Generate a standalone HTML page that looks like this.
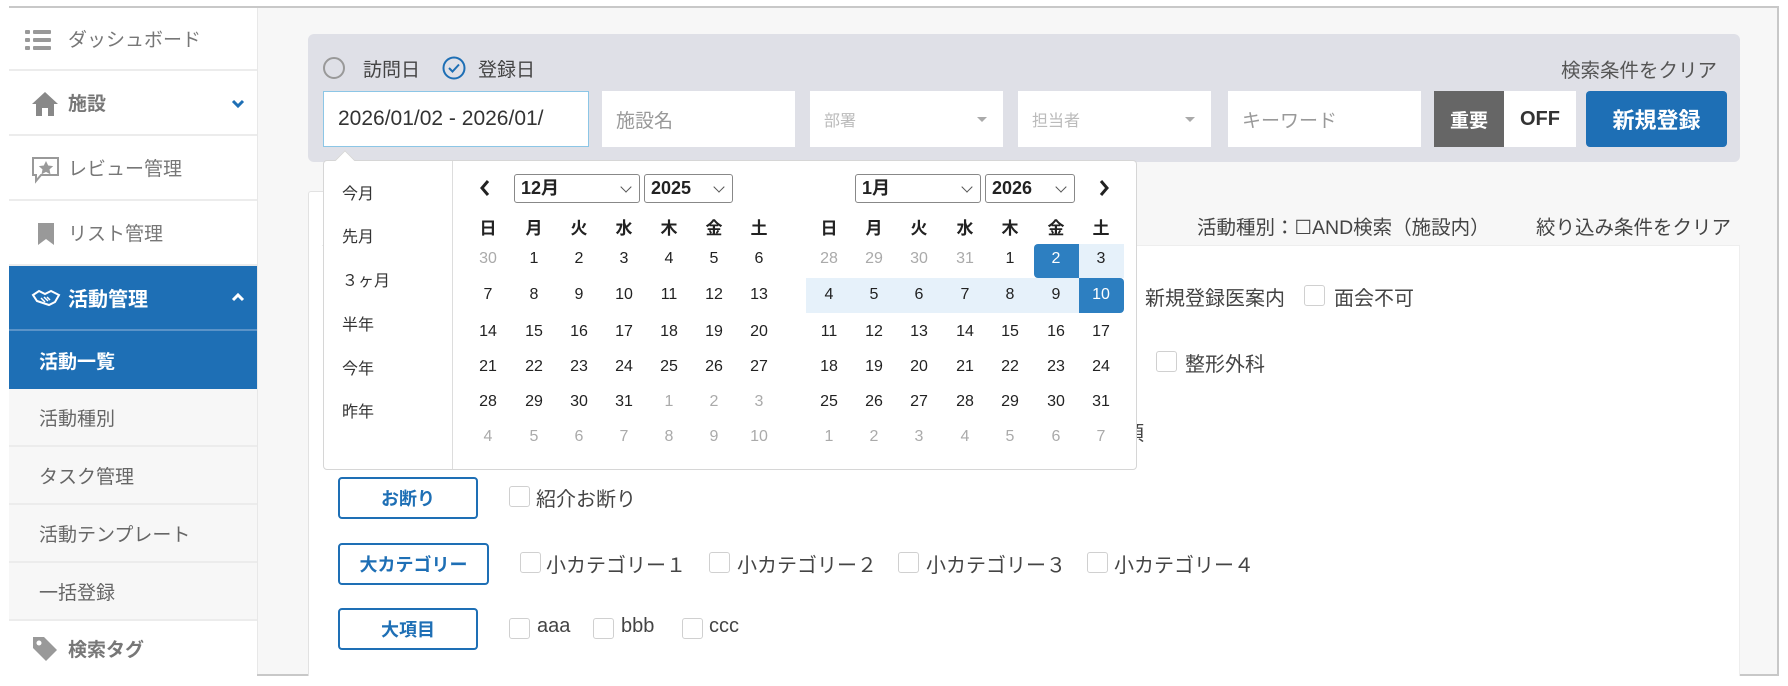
<!DOCTYPE html>
<html><head><meta charset="utf-8">
<style>
*{box-sizing:border-box;margin:0;padding:0}
body{width:1788px;height:686px;background:#fff;font-family:"Liberation Sans","Noto Sans CJK JP",sans-serif;position:relative;overflow:hidden;color:#333}
.a{position:absolute}
#frame{left:9px;top:6px;width:1770px;height:670px;border:2px solid #c8c8c8;background:#f7f7f7;overflow:hidden}
.side{position:absolute;left:9px;width:248px;border-bottom:2px solid #ececec;background:#fff;color:#666;font-size:19px;display:flex;align-items:center}
.side .t{position:absolute;left:59px}
.sub{background:#f7f7f7;color:#666}
.sub .t{left:30px}
.blue{background:#1e6fb5;color:#fff;border-bottom:2px solid #5b93c8}
.panel{left:308px;top:34px;width:1432px;height:128px;background:#dfe0e7;border-radius:6px}
.inp{top:91px;height:56px;background:#fff;font-size:19px;color:#999;display:flex;align-items:center;padding-left:14px}
.caret{position:absolute;right:16px;top:26px;width:0;height:0;border-left:5px solid transparent;border-right:5px solid transparent;border-top:5px solid #aaa}
.pop{left:323px;top:160px;width:814px;height:310px;background:#fff;border:1px solid #d6d6d6;border-radius:4px}
.rng{position:absolute;left:18px;font-size:16px;color:#333}
.sel{top:174px;height:29px;border:1px solid #888;border-radius:3px;background:#fff;font-size:18px;font-weight:bold;padding-left:6px;line-height:27px;color:#222}
.sel:after{content:"";position:absolute;right:9px;top:8px;width:7px;height:7px;border-right:1.5px solid #555;border-bottom:1.5px solid #555;transform:rotate(45deg)}
.d{position:absolute;width:44px;text-align:center;font-size:16px;color:#222;transform:translateX(-22px)}
.g{color:#aaa}
.h{font-weight:bold;font-size:17px}
.btn{height:42px;border:2px solid #1e6fb5;border-radius:4px;background:#fff;color:#1e6fb5;font-weight:bold;font-size:18px;display:flex;align-items:center;justify-content:center}
.cb{width:21px;height:21px;border:1.5px solid #d0d0d0;border-radius:3px;background:#fff}
.lb{font-size:20px;color:#444}
</style></head><body>
<div id="frame" class="a"></div>
<div class="a" style="left:257px;top:8px;width:1px;height:666px;background:#e8e8e8"></div>

<!-- sidebar -->
<div class="side" style="top:8px;height:63px"><svg class="a" style="left:16px;top:21px" width="28" height="22"><g fill="#999"><rect x="0" y="1" width="5" height="4" rx="1"/><rect x="0" y="9" width="5" height="4" rx="1"/><rect x="0" y="17" width="5" height="4" rx="1"/><rect x="8" y="1" width="18" height="4" rx="1"/><rect x="8" y="9" width="18" height="4" rx="1"/><rect x="8" y="17" width="18" height="4" rx="1"/></g></svg><span class="t" style="color:#777">ダッシュボード</span></div>
<div class="side" style="top:71px;height:65px"><svg class="a" style="left:22px;top:20px" width="28" height="26"><path d="M14 1 L27 13 H23 V25 H17 V17 H11 V25 H5 V13 H1 Z" fill="#888"/></svg><span class="t" style="color:#777;font-weight:bold">施設</span><svg class="a" style="left:222px;top:28px" width="14" height="10"><path d="M2 2 L7 7 L12 2" stroke="#1e6fb5" stroke-width="3" fill="none"/></svg></div>
<div class="side" style="top:136px;height:65px"><svg class="a" style="left:22px;top:20px" width="30" height="28"><path d="M2 2 H27 V19 H10 L5 25 V19 H2 Z" stroke="#999" stroke-width="2" fill="none"/><path d="M15 5 l2.2 4.5 5 .6 -3.7 3.3 1 5 -4.5-2.5 -4.5 2.5 1-5 -3.7-3.3 5-.6z" fill="#999"/></svg><span class="t" style="color:#777">レビュー管理</span></div>
<div class="side" style="top:201px;height:65px"><svg class="a" style="left:28px;top:21px" width="18" height="24"><path d="M1 1 H17 V23 L9 17 L1 23 Z" fill="#999"/></svg><span class="t" style="color:#777">リスト管理</span></div>
<div class="side blue" style="top:266px;height:65px"><svg class="a" style="left:22px;top:23px" width="30" height="18"><path d="M2 6 L8 2 L14 5 L20 2 L28 6 L24 13 L18 16 L12 14 L6 12 Z" stroke="#fff" stroke-width="2" fill="none"/><path d="M10 9 l4 4 M13 8 l4 4 M16 8 l3 3" stroke="#fff" stroke-width="1.5"/></svg><span class="t" style="font-weight:bold;font-size:20px">活動管理</span><svg class="a" style="left:222px;top:26px" width="14" height="10"><path d="M2 8 L7 3 L12 8" stroke="#fff" stroke-width="3" fill="none"/></svg></div>
<div class="side blue" style="top:331px;height:58px;border-bottom:none"><span class="t" style="left:30px;font-weight:bold">活動一覧</span></div>
<div class="side sub" style="top:389px;height:58px"><span class="t">活動種別</span></div>
<div class="side sub" style="top:447px;height:58px"><span class="t">タスク管理</span></div>
<div class="side sub" style="top:505px;height:58px"><span class="t">活動テンプレート</span></div>
<div class="side sub" style="top:563px;height:58px"><span class="t">一括登録</span></div>
<div class="side" style="top:621px;height:55px;border:none"><svg class="a" style="left:22px;top:14px" width="28" height="28"><path d="M2 2 H13 L26 15 L15 26 L2 13 Z" fill="#999"/><circle cx="8" cy="8" r="2.5" fill="#fff"/></svg><span class="t" style="color:#777;font-weight:bold">検索タグ</span></div>

<!-- search panel -->
<div class="a panel"></div>
<div class="a" style="left:323px;top:57px;width:22px;height:22px;border:2px solid #999;border-radius:50%"></div>
<div class="a" style="left:363px;top:55px;font-size:19px;color:#444">訪問日</div>
<svg class="a" style="left:442px;top:56px" width="24" height="24"><circle cx="12" cy="12" r="10.5" stroke="#1e6fb5" stroke-width="2" fill="none"/><path d="M7 12 l3.5 3.5 l6.5-7" stroke="#1e6fb5" stroke-width="2" fill="none"/></svg>
<div class="a" style="left:478px;top:55px;font-size:19px;color:#444">登録日</div>
<div class="a" style="left:1561px;top:54px;font-size:19.5px;color:#555">検索条件をクリア</div>

<div class="a inp" style="left:323px;width:266px;border:1.5px solid #8cc6e6;color:#333;font-size:21px;overflow:hidden;white-space:nowrap">2026/01/02 - 2026/01/</div>
<div class="a inp" style="left:602px;width:193px">施設名</div>
<div class="a inp" style="left:810px;width:193px;font-size:16px;color:#bbb">部署<span class="caret"></span></div>
<div class="a inp" style="left:1018px;width:193px;font-size:16px;color:#bbb">担当者<span class="caret"></span></div>
<div class="a inp" style="left:1228px;width:193px">キーワード</div>
<div class="a" style="left:1434px;top:91px;width:70px;height:56px;background:#666;color:#fff;font-weight:bold;font-size:19px;display:flex;align-items:center;justify-content:center">重要</div>
<div class="a" style="left:1504px;top:91px;width:72px;height:56px;background:#fff;color:#333;font-weight:bold;font-size:20px;display:flex;align-items:center;justify-content:center">OFF</div>
<div class="a" style="left:1586px;top:91px;width:141px;height:56px;background:#1e6fb5;border-radius:4px;color:#fff;font-weight:bold;font-size:22px;display:flex;align-items:center;justify-content:center">新規登録</div>

<!-- card -->
<div class="a" style="left:308px;top:191px;width:30px;height:290px;background:#fff;border:1px solid #e2e2e2;border-radius:3px 0 0 0"></div>
<div class="a" style="left:1197px;top:211px;font-size:19.5px;color:#444">活動種別：☐AND検索（施設内）</div>
<div class="a" style="left:1536px;top:211px;font-size:19.5px;color:#444">絞り込み条件をクリア</div>
<div class="a" style="left:320px;top:245px;width:1420px;height:431px;background:#fff;border-top:1px solid #eee;border-right:1px solid #eee"></div>
<div class="a" style="left:308px;top:245px;width:14px;height:431px;background:#fff;border-left:1px solid #e2e2e2"></div>

<div class="a lb" style="left:1145px;top:282px">新規登録医案内</div>
<div class="a cb" style="left:1304px;top:285px"></div>
<div class="a lb" style="left:1334px;top:282px">面会不可</div>
<div class="a cb" style="left:1156px;top:351px"></div>
<div class="a lb" style="left:1185px;top:348px">整形外科</div>
<div class="a lb" style="left:1124px;top:417px">項</div>

<div class="a btn" style="left:338px;top:477px;width:140px">お断り</div>
<div class="a cb" style="left:509px;top:486px"></div><div class="a lb" style="left:536px;top:483px">紹介お断り</div>
<div class="a btn" style="left:338px;top:543px;width:151px">大カテゴリー</div>
<div class="a cb" style="left:520px;top:552px"></div><div class="a lb" style="left:546px;top:549px">小カテゴリー１</div>
<div class="a cb" style="left:709px;top:552px"></div><div class="a lb" style="left:737px;top:549px">小カテゴリー２</div>
<div class="a cb" style="left:898px;top:552px"></div><div class="a lb" style="left:926px;top:549px">小カテゴリー３</div>
<div class="a cb" style="left:1087px;top:552px"></div><div class="a lb" style="left:1114px;top:549px">小カテゴリー４</div>
<div class="a btn" style="left:338px;top:608px;width:140px">大項目</div>
<div class="a cb" style="left:509px;top:618px"></div><div class="a lb" style="left:537px;top:615px">aaa</div>
<div class="a cb" style="left:593px;top:618px"></div><div class="a lb" style="left:621px;top:615px">bbb</div>
<div class="a cb" style="left:682px;top:618px"></div><div class="a lb" style="left:709px;top:615px">ccc</div>

<!-- popup -->
<div class="a pop">
 <div class="a" style="left:128px;top:0;width:1px;height:308px;background:#ddd"></div>
 <div class="rng" style="top:19px">今月</div>
 <div class="rng" style="top:62px">先月</div>
 <div class="rng" style="top:106px">３ヶ月</div>
 <div class="rng" style="top:150px">半年</div>
 <div class="rng" style="top:194px">今年</div>
 <div class="rng" style="top:237px">昨年</div>
</div>
<div class="a" style="left:338px;top:153px;width:14px;height:14px;background:#fff;border-left:1px solid #d6d6d6;border-top:1px solid #d6d6d6;transform:rotate(45deg)"></div>

<svg class="a" style="left:478px;top:179px" width="14" height="18"><path d="M10 2 L4 9 L10 16" stroke="#222" stroke-width="3" fill="none"/></svg>
<svg class="a" style="left:1097px;top:179px" width="14" height="18"><path d="M4 2 L10 9 L4 16" stroke="#222" stroke-width="3" fill="none"/></svg>
<div class="a sel" style="left:514px;width:126px">12月</div>
<div class="a sel" style="left:644px;width:89px">2025</div>
<div class="a sel" style="left:855px;width:126px">1月</div>
<div class="a sel" style="left:985px;width:90px">2026</div>

<!-- highlights -->
<div class="a" style="left:1079px;top:244px;width:45px;height:34px;background:#e6f1fa"></div>
<div class="a" style="left:806px;top:278px;width:273px;height:35px;background:#e6f1fa"></div>
<div class="a" style="left:1034px;top:244px;width:45px;height:34px;background:#2d7fc1;border-radius:4px 0 0 4px"></div>
<div class="a" style="left:1079px;top:278px;width:45px;height:35px;background:#2d7fc1;border-radius:0 4px 4px 0"></div>

<div id="cal"></div>
<script>
var L=[488,534,579,624,669,714,759],R=[829,874,919,965,1010,1056,1101],Y=[250,286,323,358,393,428],HY=214;
var wd=["日","月","火","水","木","金","土"];
var h="";
function put(x,y,t,c){h+='<div class="d '+(c||"")+'" style="left:'+x+'px;top:'+y+'px">'+t+'</div>';}
wd.forEach(function(w,i){put(L[i],HY,w,"h");put(R[i],HY,w,"h");});
var lm=[[30,1,2,3,4,5,6],[7,8,9,10,11,12,13],[14,15,16,17,18,19,20],[21,22,23,24,25,26,27],[28,29,30,31,1,2,3],[4,5,6,7,8,9,10]];
var rm=[[28,29,30,31,1,2,3],[4,5,6,7,8,9,10],[11,12,13,14,15,16,17],[18,19,20,21,22,23,24],[25,26,27,28,29,30,31],[1,2,3,4,5,6,7]];
lm.forEach(function(r,ri){r.forEach(function(n,i){var g=(ri==0&&i==0)||(ri==4&&i>3)||ri==5;put(L[i],Y[ri],n,g?"g":"");});});
rm.forEach(function(r,ri){r.forEach(function(n,i){var g=(ri==0&&i<4)||ri==5;var st="";if((ri==0&&i==5)||(ri==1&&i==6))st="color:#fff";h+='<div class="d '+(g?"g":"")+'" style="left:'+R[i]+'px;top:'+Y[ri]+'px;'+st+'">'+n+'</div>';});});
document.getElementById("cal").innerHTML=h;
</script>
</body></html>
